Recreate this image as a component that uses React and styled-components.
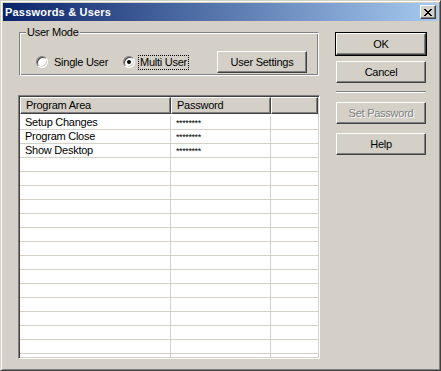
import React from "react";
import styled, { createGlobalStyle } from "styled-components";

const GlobalStyle = createGlobalStyle`
  html, body {
    margin: 0;
    padding: 0;
    background: #d4d0c8;
  }
  body {
    font-family: "Liberation Sans", Arial, sans-serif;
    font-size: 11px;
    letter-spacing: -0.25px;
    color: #000;
  }
`;

const Window = styled.div`
  box-sizing: border-box;
  width: 441px;
  height: 371px;
  background: #d4d0c8;
  border: 1px solid;
  border-color: #d4d0c8 #404040 #404040 #d4d0c8;
  box-shadow: inset 1px 1px 0 #fff, inset -1px -1px 0 #808080;
  padding: 2px;
  display: flex;
  flex-direction: column;
`;

const TitleBar = styled.div`
  height: 18px;
  display: flex;
  align-items: center;
  justify-content: space-between;
  padding: 0 2px 0 2px;
  background: linear-gradient(to right, #0a246a, #a6caf0);
`;

const Title = styled.span`
  color: #fff;
  font-weight: bold;
  font-size: 11px;
  letter-spacing: 0.2px;
  line-height: 13px;
`;

const CloseButton = styled.div`
  box-sizing: border-box;
  width: 16px;
  height: 14px;
  background: #d4d0c8;
  border: 1px solid;
  border-color: #fff #404040 #404040 #fff;
  box-shadow: inset -1px -1px 0 #808080;
  display: flex;
  align-items: center;
  justify-content: center;
`;

const Body = styled.div`
  flex: 1;
  display: flex;
  gap: 16px;
  padding: 0 12px 0 15px;
`;

const LeftColumn = styled.div`
  width: 302px;
  display: flex;
  flex-direction: column;
`;

const GroupBox = styled.div`
  box-sizing: border-box;
  margin: 11px 0 0 1px;
  width: 300px;
  height: 44px;
  border: 1px solid;
  border-color: #808080 #fff #fff #808080;
  box-shadow: inset 1px 1px 0 #fff, inset -1px -1px 0 #808080;
`;

const GroupLabel = styled.span`
  display: inline-block;
  margin: -7px 0 0 6px;
  padding: 0 1px;
  line-height: 13px;
  background: #d4d0c8;
  vertical-align: top;
`;

const GroupRow = styled.div`
  display: flex;
  align-items: center;
  height: 22px;
  margin-top: 6px;
  padding: 0 11px 0 16px;
`;

const RadioOption = styled.label`
  display: flex;
  align-items: center;
  gap: ${(p) => p.$gap}px;
  width: ${(p) => (p.$width ? `${p.$width}px` : "auto")};
`;

const RadioCircle = styled.span`
  box-sizing: border-box;
  width: 12px;
  height: 12px;
  border-radius: 50%;
  border: 1px solid;
  border-color: #808080 #fff #fff #808080;
  background: #fff;
  box-shadow: inset 1px 1px 0 #404040, inset -1px -1px 0 #d4d0c8;
  display: flex;
  align-items: center;
  justify-content: center;
  flex-shrink: 0;
`;

const RadioDot = styled.span`
  width: 4px;
  height: 4px;
  border-radius: 50%;
  background: #000;
`;

const RadioText = styled.span`
  line-height: 13px;
  padding: 0 1px;
  outline: ${(p) => (p.$focused ? "1px dotted #000" : "none")};
`;

const Button = styled.div`
  box-sizing: border-box;
  width: 90px;
  height: 22px;
  display: flex;
  align-items: center;
  justify-content: center;
  background: #d4d0c8;
  border: 1px solid;
  border-color: #fff #404040 #404040 #fff;
  box-shadow: inset -1px -1px 0 #808080;
  color: ${(p) => (p.$disabled ? "#808080" : "#000")};
  text-shadow: ${(p) => (p.$disabled ? "1px 1px 0 #fff" : "none")};
  margin-top: ${(p) => p.$top || 0}px;
  ${(p) =>
    p.$default &&
    `
    outline: 1px solid #000;
    outline-offset: 0;
  `}
`;

const SettingsButton = styled(Button)`
  margin-left: auto;
`;

const ListView = styled.div`
  box-sizing: border-box;
  margin-top: 19px;
  height: 264px;
  background: #fff;
  border: 1px solid;
  border-color: #808080 #fff #fff #808080;
  box-shadow: inset 1px 1px 0 #404040, inset -1px -1px 0 #d4d0c8;
  padding: 1px;
  overflow: hidden;
  display: flex;
  flex-direction: column;
`;

const HeaderRow = styled.div`
  display: flex;
  height: 17px;
  flex-shrink: 0;
`;

const HeaderCell = styled.div`
  box-sizing: border-box;
  width: ${(p) => (p.$width ? `${p.$width}px` : "auto")};
  flex: ${(p) => (p.$width ? "none" : 1)};
  background: #d4d0c8;
  border: 1px solid;
  border-color: #fff #404040 #404040 #fff;
  box-shadow: inset -1px -1px 0 #808080;
  padding-left: 5px;
  line-height: 14px;
  white-space: nowrap;
`;

const Rows = styled.div`
  padding-top: 2px;
`;

const Row = styled.div`
  display: flex;
  height: 14px;
  box-sizing: border-box;
  border-bottom: 1px solid #d4d0c8;
`;

const Cell = styled.div`
  box-sizing: border-box;
  width: ${(p) => (p.$width ? `${p.$width}px` : "auto")};
  flex: ${(p) => (p.$width ? "none" : 1)};
  border-right: ${(p) => (p.$width ? "1px solid #d4d0c8" : "none")};
  padding-left: 5px;
  line-height: 13px;
  white-space: nowrap;
`;

const Stars = styled.span`
  font-size: 9px;
  line-height: 13px;
  letter-spacing: -0.4px;
  vertical-align: top;
  position: relative;
  top: 1px;
`;

const RightColumn = styled.div`
  width: 90px;
  display: flex;
  flex-direction: column;
  padding-top: 12px;
`;

const Separator = styled.div`
  height: 1px;
  margin-top: 8px;
  background: #808080;
  border-bottom: 1px solid #fff;
`;

const rows = [
  { area: "Setup Changes", pw: "********" },
  { area: "Program Close", pw: "********" },
  { area: "Show Desktop", pw: "********" },
];

export default function App() {
  const filler = Array.from({ length: 16 }, () => ({ area: "", pw: "" }));
  const allRows = [...rows, ...filler];

  return (
    <>
      <GlobalStyle />
      <Window>
        <TitleBar>
          <Title>Passwords &amp; Users</Title>
          <CloseButton>
            <svg width="8" height="7" viewBox="0 0 8 7" shapeRendering="crispEdges">
              <path
                d="M0 0h2v1H0zM6 0h2v1H6zM1 1h2v1H1zM5 1h2v1H5zM2 2h4v1H2zM3 3h2v1H3zM2 4h4v1H2zM1 5h2v1H1zM5 5h2v1H5zM0 6h2v1H0zM6 6h2v1H6z"
                fill="#000"
              />
            </svg>
          </CloseButton>
        </TitleBar>
        <Body>
          <LeftColumn>
            <GroupBox>
              <GroupLabel>User Mode</GroupLabel>
              <GroupRow>
                <RadioOption $gap={5} $width={87}>
                  <RadioCircle />
                  <RadioText>Single User</RadioText>
                </RadioOption>
                <RadioOption $gap={4}>
                  <RadioCircle>
                    <RadioDot />
                  </RadioCircle>
                  <RadioText $focused>Multi User</RadioText>
                </RadioOption>
                <SettingsButton>User Settings</SettingsButton>
              </GroupRow>
            </GroupBox>
            <ListView>
              <HeaderRow>
                <HeaderCell $width={151}>Program Area</HeaderCell>
                <HeaderCell $width={100}>Password</HeaderCell>
                <HeaderCell />
              </HeaderRow>
              <Rows>
                {allRows.map((r, i) => (
                  <Row key={i}>
                    <Cell $width={151}>{r.area}</Cell>
                    <Cell $width={100}>
                      <Stars>{r.pw}</Stars>
                    </Cell>
                    <Cell />
                  </Row>
                ))}
              </Rows>
            </ListView>
          </LeftColumn>
          <RightColumn>
            <Button $default>OK</Button>
            <Button $top={6}>Cancel</Button>
            <Separator />
            <Button $top={9} $disabled>
              Set Password
            </Button>
            <Button $top={9}>Help</Button>
          </RightColumn>
        </Body>
      </Window>
    </>
  );
}
